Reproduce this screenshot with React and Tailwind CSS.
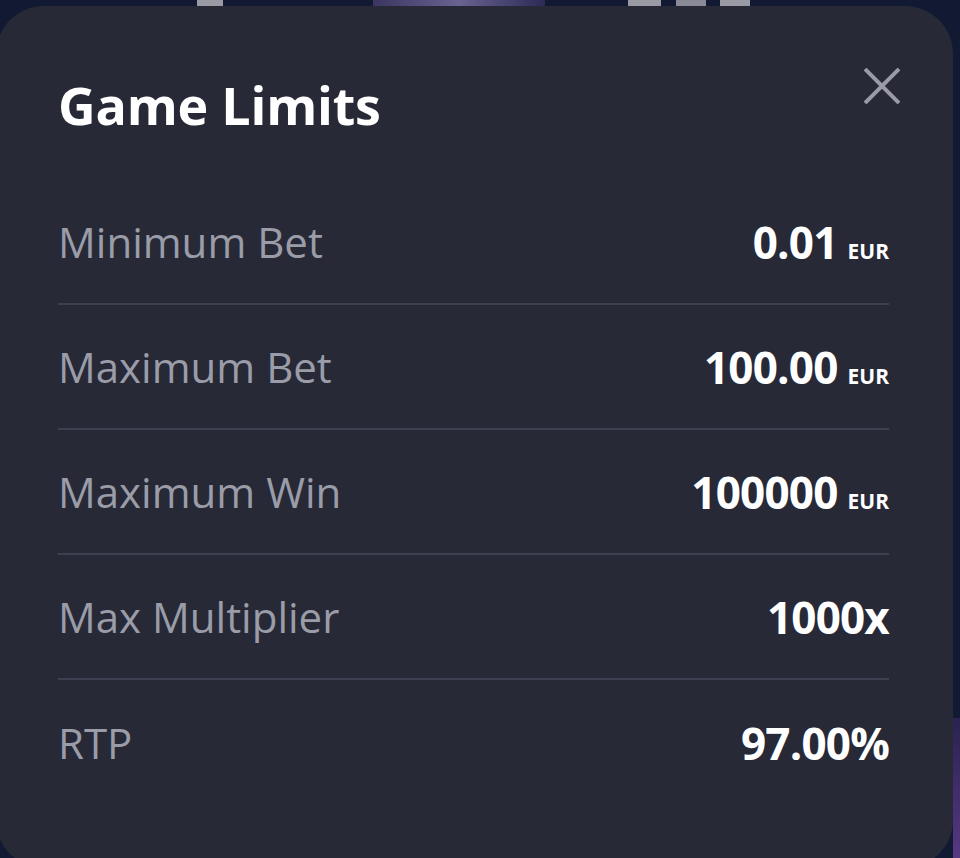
import React from "react";

const rows = [
  { label: "Minimum Bet", value: "0.01", unit: "EUR" },
  { label: "Maximum Bet", value: "100.00", unit: "EUR" },
  { label: "Maximum Win", value: "100000", unit: "EUR" },
  { label: "Max Multiplier", value: "1000x" },
  { label: "RTP", value: "97.00%" },
];

export default function App() {
  return (
    <div
      className="w-[960px] h-[858px] overflow-hidden bg-[#121a33] flex flex-col"
      style={{ fontFamily: '"Open Sans", "Noto Sans", sans-serif' }}
    >
      {/* background scene peeking above the modal */}
      <div className="h-[6px] shrink-0 flex">
        <div className="w-[197px]" />
        <div className="w-[26px] bg-[#9a9aa4]" />
        <div className="w-[150px]" />
        <div className="w-[172px] bg-gradient-to-r from-[#3b3560] via-[#6a6392] to-[#2c2b55]" />
        <div className="w-[83px]" />
        <div className="w-[33px] bg-[#9a9aa4]" />
        <div className="w-[15px]" />
        <div className="w-[30px] bg-[#8a8a96]" />
        <div className="w-[14px]" />
        <div className="w-[30px] bg-[#9a9aa4]" />
      </div>

      <div className="flex flex-1">
        <div className="ml-[-4px] w-[957px] h-[862px] shrink-0 rounded-[48px] bg-[#272937] pl-[62px] pr-[64px] pt-[63px]">
          <div className="flex items-start justify-between">
            <h1 className="text-[52px] leading-[72px] font-bold text-white tracking-[-0.2px]">
              Game Limits
            </h1>
            <button className="w-[36px] h-[36px] mt-[-1px] mr-[-11px] flex items-center justify-center">
              <svg width="36" height="36" viewBox="0 0 36 36" fill="none">
                <path d="M1 1 L35 35 M35 1 L1 35" stroke="#9a9ba6" strokeWidth="4" />
              </svg>
            </button>
          </div>

          <div className="mt-[39px] flex flex-col">
            {rows.map((r, i) => (
              <div
                key={r.label}
                className={
                  "flex items-center justify-between h-[125px] " +
                  (i < rows.length - 1 ? "border-b-2 border-[#3e4051]" : "")
                }
              >
                <span className="text-[42px] leading-[58px] text-[#9a9ca8]">{r.label}</span>
                <span className="flex items-baseline gap-[10px]">
                  <span className="text-[44px] leading-[58px] font-bold text-white tracking-[-0.8px]">
                    {r.value}
                  </span>
                  {r.unit && (
                    <span className="text-[21px] font-bold text-white">{r.unit}</span>
                  )}
                </span>
              </div>
            ))}
          </div>
        </div>
        <div className="flex-1 flex flex-col justify-end">
          <div className="h-[150px] bg-gradient-to-b from-[#2a2250] to-[#5a3a86]" />
        </div>
      </div>
    </div>
  );
}
